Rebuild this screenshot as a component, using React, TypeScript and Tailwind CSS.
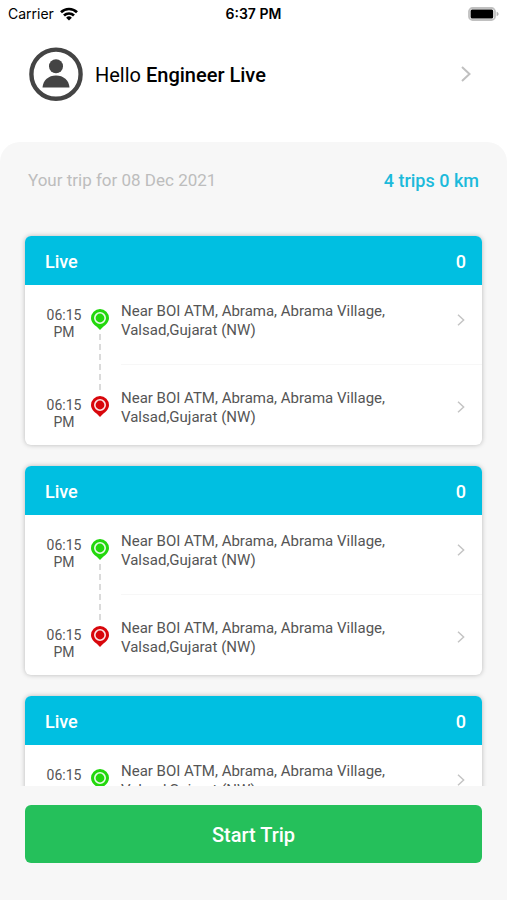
import React from 'react';

interface Stop {
    time: string;
    period: string;
    address: string;
    pinClass: string;
}

interface Trip {
    id: number;
    name: string;
    count: number;
    stops: Stop[];
}

const ADDRESS = 'Near BOI ATM, Abrama, Abrama Village, Valsad,Gujarat (NW)';

const STOPS: Stop[] = [
    { time: '06:15', period: 'PM', address: ADDRESS, pinClass: 'text-[#22d80c]' },
    { time: '06:15', period: 'PM', address: ADDRESS, pinClass: 'text-[#d8070c]' },
];

const TRIPS: Trip[] = [
    { id: 1, name: 'Live', count: 0, stops: STOPS },
    { id: 2, name: 'Live', count: 0, stops: STOPS },
    { id: 3, name: 'Live', count: 0, stops: STOPS },
];

const WifiIcon = () => (
    <svg className="w-[18px] h-[14px]" viewBox="0 0 18 14" fill="none" stroke="currentColor" strokeWidth="2.7">
        <path d="M1 5.2a11.6 11.6 0 0 1 16 0" />
        <path d="M4 8.5a7.3 7.3 0 0 1 10 0" />
        <path d="M9 13.6 6.1 10.7a4.1 4.1 0 0 1 5.8 0Z" fill="currentColor" stroke="none" />
    </svg>
);

const BatteryIcon = () => (
    <svg className="w-[31px] h-[14px]" viewBox="0 0 31 14">
        <rect x="1" y="1" width="26" height="12" rx="3.6" fill="#fff" stroke="#c0c0c0" strokeWidth="1.8" />
        <rect x="2.6" y="2.5" width="22.6" height="9" rx="1.6" fill="#000" />
        <path d="M28.6 4.8c1.3.4 2 1.2 2 2.2s-.7 1.8-2 2.2z" fill="#b4b4b4" />
    </svg>
);

const AvatarIcon = () => (
    <svg className="w-[54px] h-[54px] text-[#444]" viewBox="0 0 54 54">
        <circle cx="27" cy="27.2" r="24.6" fill="none" stroke="currentColor" strokeWidth="4.4" />
        <circle cx="27" cy="19.2" r="7" fill="currentColor" />
        <path d="M13.5 40.5c.5-7.2 6-12 13.5-12s13 4.8 13.5 12z" fill="currentColor" />
    </svg>
);

const PinIcon = ({ className }: { className: string }) => (
    <svg className={`w-[18px] h-[21px] ${className}`} viewBox="0 0 18 21">
        <path d="M9 0a9 9 0 0 0-9 9c0 4.2 3.2 6.8 5.8 8.8L9 21l3.2-3.2C14.8 15.8 18 13.2 18 9a9 9 0 0 0-9-9z" fill="currentColor" />
        <circle cx="9" cy="9" r="5.2" fill="none" stroke="#fff" strokeOpacity="0.9" strokeWidth="1.6" />
    </svg>
);

const Chevron = ({ className }: { className: string }) => (
    <svg className={className} viewBox="0 0 10 16" fill="none" stroke="currentColor" strokeWidth="2">
        <path d="M1 1l7.5 7L1 15" />
    </svg>
);

const TripCard = ({ trip }: { trip: Trip }) => (
    <li className="shrink-0 rounded-md bg-white shadow-[0_0_5px_rgba(0,0,0,0.25)]">
        <h2 className="flex h-[49px] items-center justify-between rounded-t-md bg-[#00bfe1] pt-0.5 pl-5 pr-4 text-lg font-medium text-white">
            <span>{trip.name}</span>
            <span>{trip.count}</span>
        </h2>

        <div className="flex h-40 pl-5">
            {/* Times */}
            <div className="flex w-[38px] flex-col justify-between pt-[22px] pb-3.5 text-center text-sm leading-[17px] text-[#555]">
                {trip.stops.map((stop, i) => (
                    <p key={i}>
                        {stop.time}
                        <br />
                        {stop.period}
                    </p>
                ))}
            </div>

            {/* Route line */}
            <div className="ml-2 flex w-[18px] flex-col items-center gap-1 pt-6 pb-7">
                <PinIcon className={trip.stops[0].pinClass} />
                <div className="w-0.5 flex-1 bg-[repeating-linear-gradient(to_bottom,#dadada_0_6px,transparent_6px_10px)]" />
                <PinIcon className={trip.stops[1].pinClass} />
            </div>

            {/* Stops */}
            <div className="ml-3 flex flex-1 flex-col divide-y divide-[#f7f7f7]">
                {trip.stops.map((stop, i) => (
                    <a key={i} href="#stop" className="flex items-start pt-[17px] pr-[17px] pb-6 text-[15px] leading-[19px] text-[#555] last:pt-6">
                        <span className="w-[280px]">{stop.address}</span>
                        <Chevron className="mt-3 ml-auto h-3 w-2 text-[#c4c4c4]" />
                    </a>
                ))}
            </div>
        </div>
    </li>
);

const App: React.FC = () => {
    return (
        <div className="flex h-screen flex-col bg-white font-['Roboto',sans-serif] text-black">
            {/* Status bar */}
            <div className="grid h-7 shrink-0 grid-cols-3 items-center px-2 font-['Inter',sans-serif] text-sm">
                <span className="flex items-center gap-1.5">
                    Carrier
                    <WifiIcon />
                </span>
                <span className="text-center font-semibold">6:37 PM</span>
                <span className="flex justify-end">
                    <BatteryIcon />
                </span>
            </div>

            {/* Profile */}
            <button type="button" className="flex h-[114px] shrink-0 items-start pt-[19px] pr-9 pl-[29px] text-left">
                <AvatarIcon />
                <span className="ml-3 self-start text-xl leading-[56px]">
                    Hello <b className="font-medium">Engineer Live</b>
                </span>
                <Chevron className="mt-[19px] ml-auto h-4 w-2.5 text-[#c0c0c0]" />
            </button>

            {/* Trips */}
            <main className="flex min-h-0 flex-1 flex-col rounded-t-[20px] bg-[#f7f7f7]">
                <div className="flex h-[74px] shrink-0 items-center justify-between px-7 pt-1">
                    <p className="text-[17px] text-[#bdbdbd]">Your trip for 08 Dec 2021</p>
                    <p className="text-lg font-medium text-[#1cbadb]">4 trips 0 km</p>
                </div>

                <ul className="flex min-h-0 flex-1 flex-col gap-[21px] overflow-y-auto px-[25px] pt-5 [scrollbar-width:none]">
                    {TRIPS.map((trip) => (
                        <TripCard key={trip.id} trip={trip} />
                    ))}
                </ul>

                <div className="px-[25px] pt-[19px] pb-[37px]">
                    <button type="button" className="h-[58px] w-full rounded-md bg-[#25c05b] pt-0.5 text-xl font-medium text-white">
                        Start Trip
                    </button>
                </div>
            </main>
        </div>
    );
};

export default App;
